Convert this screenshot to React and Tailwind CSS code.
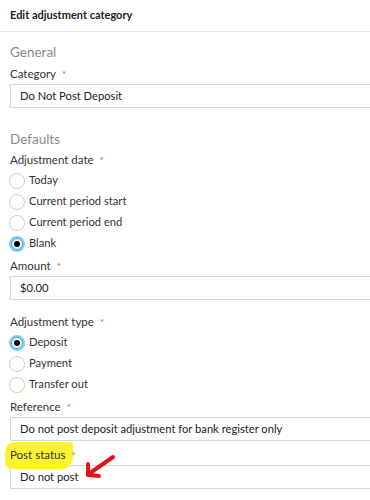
import React, { useState } from "react";

const Label = ({ children }) => (
  <div className="text-[11.5px] text-[#333] leading-[16px] mb-[2px]">
    {children}
    <span className="text-[#e06060] ml-[6px] text-[10px] align-top">*</span>
  </div>
);

const Field = ({ value }) => (
  <div className="h-[24px] mr-[-10px] border border-[#d6d6d6] flex items-center pl-[9px] text-[11.2px] text-[#222]">
    {value}
  </div>
);

const Radio = ({ label, checked, onClick }) => (
  <div className="flex items-center h-[21px] cursor-pointer" onClick={onClick}>
    {checked ? (
      <span className="w-[16px] h-[16px] rounded-full border-[2px] border-[#7fd0f5] flex items-center justify-center bg-white">
        <span className="w-[12px] h-[12px] rounded-full border border-[#3a9ad9] flex items-center justify-center">
          <span className="w-[6px] h-[6px] rounded-full bg-black" />
        </span>
      </span>
    ) : (
      <span className="w-[16px] h-[16px] rounded-full border border-[#cfcfcf] bg-white" />
    )}
    <span className="ml-[4px] text-[11.2px] text-[#333]">{label}</span>
  </div>
);

const Section = ({ title }) => (
  <div className="text-[13.5px] text-[#8a8a8a] leading-[18px]">{title}</div>
);

export default function App() {
  // choix des boutons radio
  const [dateOpt, setDateOpt] = useState("Blank");
  const [typeOpt, setTypeOpt] = useState("Deposit");

  return (
    <div
      className="w-[370px] h-[500px] overflow-hidden bg-white"
      style={{ fontFamily: 'Lato, "Open Sans", sans-serif' }}
    >
      <div className="h-[32px] border-b border-[#e3e3e3] flex items-center pl-[10px] text-[11px] font-bold text-[#222]">
        Edit adjustment category
      </div>

      <div className="pl-[10px] pt-[11px]">
        <Section title="General" />
        <div className="mt-[5px]">
          <Label>Category</Label>
          <Field value="Do Not Post Deposit" />
        </div>

        <div className="mt-[22px]">
          <Section title="Defaults" />
        </div>
        <div className="mt-[4px]">
          <Label>Adjustment date</Label>
          <div className="ml-[-1px] mt-[1px]">
            {["Today", "Current period start", "Current period end", "Blank"].map((o) => (
              <Radio key={o} label={o} checked={dateOpt === o} onClick={() => setDateOpt(o)} />
            ))}
          </div>
        </div>

        <div className="mt-[4px]">
          <Label>Amount</Label>
          <Field value="$0.00" />
        </div>

        <div className="mt-[14px]">
          <Label>Adjustment type</Label>
          <div className="ml-[-1px]">
            {["Deposit", "Payment", "Transfer out"].map((o) => (
              <Radio key={o} label={o} checked={typeOpt === o} onClick={() => setTypeOpt(o)} />
            ))}
          </div>
        </div>

        <div className="mt-[4px]">
          <Label>Reference</Label>
          <Field value="Do not post deposit adjustment for bank register only" />
        </div>

        <div className="mt-[6px] relative">
          <span className="absolute left-[-5px] top-[-5px] w-[68px] h-[27px] bg-[#fdf22f] rounded-[10px_4px_12px_6px]" />
          <div className="relative">
            <Label>Post status</Label>
          </div>
          <Field value="Do not post" />
          <svg
            className="absolute left-[70px] top-[6px]"
            width="45"
            height="28"
            viewBox="0 0 45 28"
          >
            <path
              d="M33 4 L10 20 M8 11 L8 22 L19 23"
              fill="none"
              stroke="#e41414"
              strokeWidth="4"
              strokeLinecap="round"
              strokeLinejoin="round"
            />
          </svg>
        </div>
      </div>
    </div>
  );
}
